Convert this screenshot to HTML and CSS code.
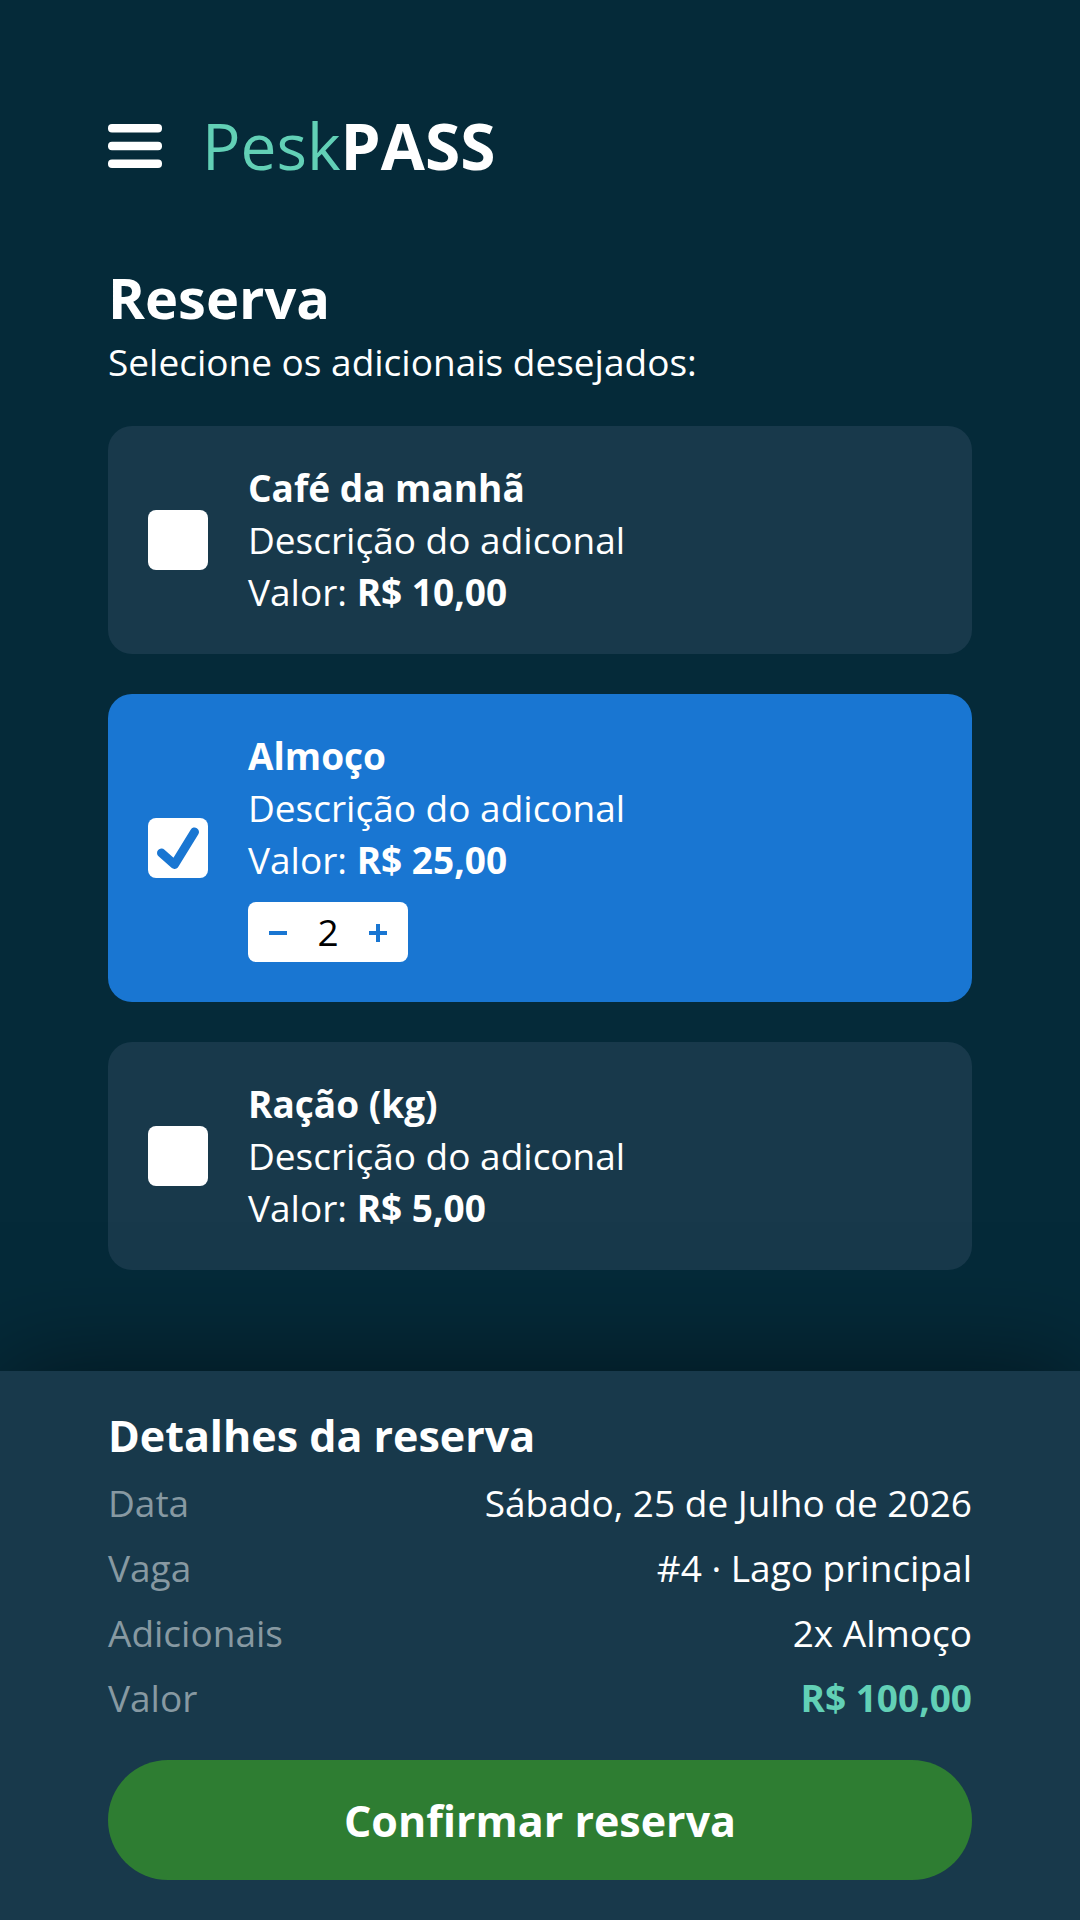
FILE: index.html
```html
<!DOCTYPE html>
<html lang="pt-BR">
<head>
    <meta charset="UTF-8">
    <title>PeskPASS - Reserva</title>
    <meta name="viewport" content="width=device-width">
    <link rel="stylesheet" href="styles.css">
</head>
<body>
    <header class="topbar">
        <button class="menu" type="button" aria-label="Menu">
            <svg width="54" height="44" viewBox="0 0 54 44">
                <rect x="0" y="0" width="54" height="8.500" rx="4" />
                <rect x="0" y="17.750" width="54" height="8.500" rx="4" />
                <rect x="0" y="35.500" width="54" height="8.500" rx="4" />
            </svg>
        </button>
        <a class="logo" href="#">Pesk<b>PASS</b></a>
    </header>

    <form class="reserva" action="#" method="post">
        <main class="content">
            <h1>Reserva</h1>
            <p class="lead">Selecione os adicionais desejados:</p>

            <div class="card">
                <input type="checkbox" id="add-cafe" name="cafe">
                <div class="info">
                    <label for="add-cafe">Café da manhã</label>
                    <p>Descrição do adiconal</p>
                    <p>Valor: <b>R$ 10,00</b></p>
                </div>
            </div>

            <div class="card selected">
                <input type="checkbox" id="add-almoco" name="almoco" checked>
                <div class="info">
                    <label for="add-almoco">Almoço</label>
                    <p>Descrição do adiconal</p>
                    <p>Valor: <b>R$ 25,00</b></p>
                    <div class="stepper">
                        <button type="button" aria-label="Menos">
                            <svg width="18" height="20" viewBox="0 0 18 20"><path d="M0 11h18" /></svg>
                        </button>
                        <input type="text" inputmode="numeric" name="qtd" value="2" aria-label="Quantidade">
                        <button type="button" aria-label="Mais">
                            <svg width="18" height="20" viewBox="0 0 18 20"><path d="M0 11h18M9 2v18" /></svg>
                        </button>
                    </div>
                </div>
            </div>

            <div class="card">
                <input type="checkbox" id="add-racao" name="racao">
                <div class="info">
                    <label for="add-racao">Ração (kg)</label>
                    <p>Descrição do adiconal</p>
                    <p>Valor: <b>R$ 5,00</b></p>
                </div>
            </div>
        </main>

        <section class="details">
            <h2>Detalhes da reserva</h2>
            <dl>
                <div class="row"><dt>Data</dt><dd>Sábado, 25 de Julho de 2026</dd></div>
                <div class="row"><dt>Vaga</dt><dd>#4 · Lago principal</dd></div>
                <div class="row"><dt>Adicionais</dt><dd>2x Almoço</dd></div>
                <div class="row"><dt>Valor</dt><dd class="total">R$ 100,00</dd></div>
            </dl>
            <button class="confirm" type="submit">Confirmar reserva</button>
        </section>
    </form>
</body>
</html>
```
FILE: styles.css
```css
*,
*::after,
*::before{
    padding: 0;
    margin: 0;
    box-sizing: border-box;
}
body{
    display: flex;
    flex-direction: column;
    min-height: 100vh;
    font: 400 37px/52px "Open Sans", "Noto Sans", sans-serif;
    color: #fff;
    background-color: #052a39;
}
button,
input{
    font: inherit;
    border: none;
}
button{
    cursor: pointer;
}

/* header */
.topbar{
    display: flex;
    align-items: center;
    gap: 40px;
    padding: 102px 10% 0;
}
.menu{
    display: flex;
    background: none;
}
.menu svg{
    fill: #fff;
}
.logo{
    font-size: 64px;
    line-height: 88px;
    color: #62d0b6;
    text-decoration: none;
}
.logo b{
    color: #fff;
}

/* extras */
.reserva{
    flex: 1;
    display: flex;
    flex-direction: column;
}
.content{
    display: flex;
    flex-direction: column;
    padding: 68px 10% 100px;
}
h1{
    font-size: 56px;
    line-height: 78px;
}
.card{
    display: flex;
    align-items: center;
    gap: 40px;
    margin-top: 40px;
    padding: 36px 40px;
    border-radius: 24px;
    background-color: #18394b;
}
.lead + .card{
    margin-top: 38px;
}
.card.selected{
    background-color: #1976d2;
}
.card input[type="checkbox"]{
    appearance: none;
    flex: none;
    width: 60px;
    height: 60px;
    border-radius: 8px;
    background-color: #fff;
}
.card input[type="checkbox"]:checked{
    background-image: url("data:image/svg+xml,%3Csvg xmlns='http://www.w3.org/2000/svg' viewBox='0 0 60 60'%3E%3Cpath d='M13.500 35l13 11.500 20-32.500' fill='none' stroke='%231976d2' stroke-width='9' stroke-linecap='round' stroke-linejoin='round'/%3E%3C/svg%3E");
}
.info label{
    display: block;
    font-weight: 700;
}
.stepper{
    display: flex;
    align-items: center;
    width: 160px;
    height: 60px;
    margin: 16px 0 4px;
    border-radius: 8px;
    background-color: #fff;
}
.stepper button{
    display: flex;
    align-items: center;
    justify-content: center;
    width: 60px;
    height: 60px;
    background: none;
}
.stepper path{
    fill: none;
    stroke: #1976d2;
    stroke-width: 4;
}
.stepper input{
    width: 40px;
    text-align: center;
    color: #000;
    background: none;
}

/* booking details */
.details{
    position: sticky;
    bottom: 0;
    margin-top: auto;
    padding: 35px 10% 40px;
    background-color: #18394b;
    box-shadow: 0 0 100px rgba(0, 0, 0, 0.5);
}
h2,
.confirm{
    font-size: 43px;
    font-weight: 700;
    line-height: 59px;
}
.row{
    display: flex;
    justify-content: space-between;
    padding-bottom: 13px;
}
dl{
    padding: 12px 0 23px;
}
dt{
    color: #8799a2;
}
.total{
    font-weight: 700;
    color: #62d0b6;
}
.confirm{
    display: block;
    width: 100%;
    height: 120px;
    border-radius: 60px;
    color: #fff;
    background-color: #2e7d32;
}
```
